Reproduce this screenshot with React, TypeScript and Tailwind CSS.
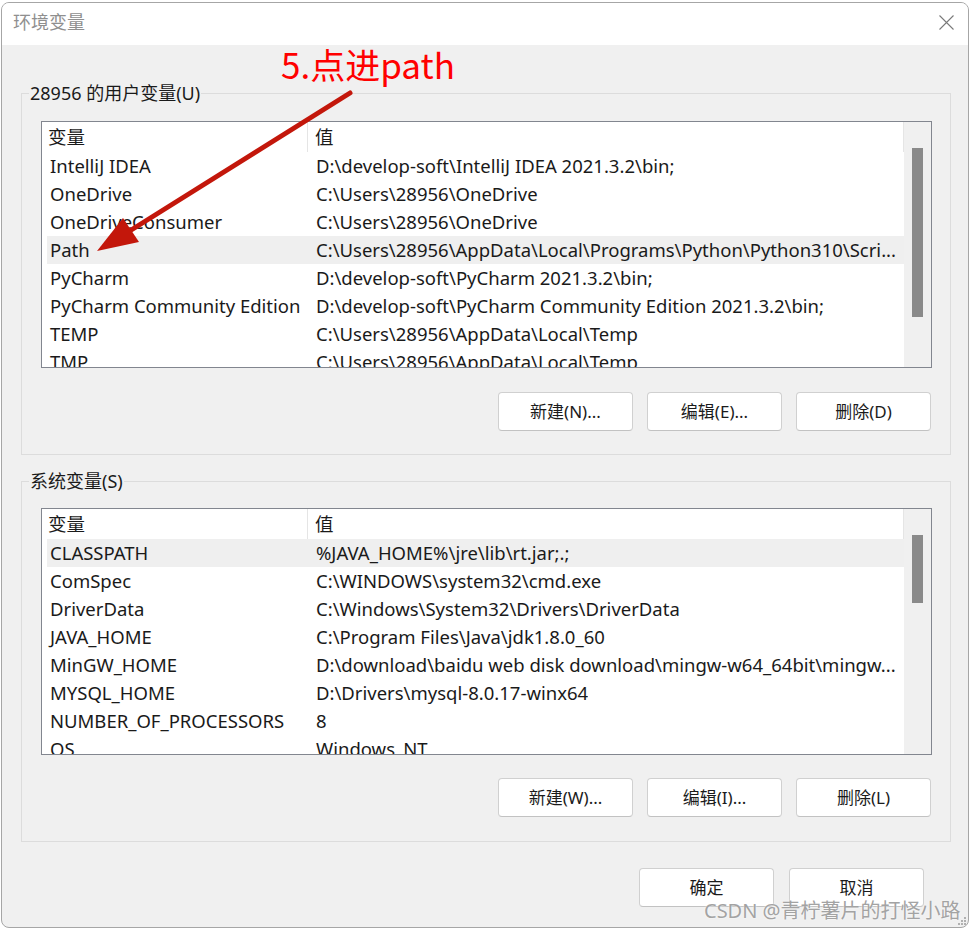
const userVars = [
  ['IntelliJ IDEA', 'D:\\develop-soft\\IntelliJ IDEA 2021.3.2\\bin;'],
  ['OneDrive', 'C:\\Users\\28956\\OneDrive'],
  ['OneDriveConsumer', 'C:\\Users\\28956\\OneDrive'],
  ['Path', 'C:\\Users\\28956\\AppData\\Local\\Programs\\Python\\Python310\\Scri...'],
  ['PyCharm', 'D:\\develop-soft\\PyCharm 2021.3.2\\bin;'],
  ['PyCharm Community Edition', 'D:\\develop-soft\\PyCharm Community Edition 2021.3.2\\bin;'],
  ['TEMP', 'C:\\Users\\28956\\AppData\\Local\\Temp'],
  ['TMP', 'C:\\Users\\28956\\AppData\\Local\\Temp'],
];

const systemVars = [
  ['CLASSPATH', '%JAVA_HOME%\\jre\\lib\\rt.jar;.;'],
  ['ComSpec', 'C:\\WINDOWS\\system32\\cmd.exe'],
  ['DriverData', 'C:\\Windows\\System32\\Drivers\\DriverData'],
  ['JAVA_HOME', 'C:\\Program Files\\Java\\jdk1.8.0_60'],
  ['MinGW_HOME', 'D:\\download\\baidu web disk download\\mingw-w64_64bit\\mingw...'],
  ['MYSQL_HOME', 'D:\\Drivers\\mysql-8.0.17-winx64'],
  ['NUMBER_OF_PROCESSORS', '8'],
  ['OS', 'Windows_NT'],
];

const Button = ({label}: {label: string}) => {
  return (
    <button className="flex h-[39px] w-[135px] items-center justify-center rounded-[4px] border border-[#d0d0d0] border-b-[#c2c2c2] bg-white text-[17px] text-[#1b1b1b]">
      {label}
    </button>
  );
};

const VarList = ({rows, selected, thumb}: {rows: string[][]; selected: number; thumb: string}) => {
  return (
    <div className="flex h-[247px] border border-[#82868f] bg-white">
      <div className="flex min-w-0 flex-1 flex-col overflow-hidden">
        <div className="flex h-[30px] shrink-0 border-r border-[#e5e5e5]">
          <div className="flex w-[266px] items-center border-r border-[#e5e5e5] pl-[6px]">变量</div>
          <div className="flex items-center pl-[7px]">值</div>
        </div>
        {rows.map(([name, value], index) => (
          <div
            key={name}
            className={`ml-[5px] flex h-[28px] shrink-0 items-center whitespace-nowrap ${index === selected ? 'bg-[#efefef]' : ''}`}
          >
            <div className="w-[261px] shrink-0 pl-[3px]">{name}</div>
            <div className="overflow-hidden pl-[8px]">{value}</div>
          </div>
        ))}
      </div>
      <div className="w-[27px] shrink-0 bg-[#f0f0f0] pl-[8px] pt-[26px]">
        <div className={`w-[11px] bg-[#8a8a8a] ${thumb}`} />
      </div>
    </div>
  );
};

const Arrow = () => {
  return (
    <svg className="pointer-events-none absolute left-0 top-0" width="972" height="931" viewBox="0 0 972 931">
      <line x1="350" y1="93" x2="128" y2="232" stroke="#c3170b" strokeWidth="5" strokeLinecap="round" />
      <polygon points="97,251 123,218 139,242" fill="#c3170b" />
    </svg>
  );
};

export default function App() {
  return (
    <div className="relative h-[931px] w-[972px] overflow-hidden bg-white font-['Noto_Sans','Noto_Sans_CJK_SC',sans-serif] text-[18.5px] text-[#1a1a1a]">
      <div className="ml-[1px] mt-[2px] flex h-[926px] w-[968px] flex-col overflow-hidden rounded-[8px] border border-[#a6a6a6] bg-[#f0f0f0]">
        <div className="flex h-[42px] shrink-0 items-center justify-between bg-white pb-[3px] pl-[11px] pr-[14px]">
          <span className="text-[18px] text-[#8f8f8f]">环境变量</span>
          <svg width="15" height="15" viewBox="0 0 15 15">
            <path d="M0.5 0.5 L14.5 14.5 M14.5 0.5 L0.5 14.5" stroke="#7a7a7a" strokeWidth="1.1" />
          </svg>
        </div>

        <fieldset className="ml-[19px] mr-[17px] mt-[36px] border border-[#dcdcdc] pb-[23px] pl-[19px] pr-[18px] pt-[16px]">
          <legend className="-ml-[12px] px-[1px] text-[18px] leading-[24px]">28956 的用户变量(U)</legend>
          <VarList rows={userVars} selected={3} thumb="h-[169px]" />
          <div className="mt-[24px] flex justify-end gap-[14px] pr-[1px]">
            <Button label="新建(N)..." />
            <Button label="编辑(E)..." />
            <Button label="删除(D)" />
          </div>
        </fieldset>

        <fieldset className="ml-[19px] mr-[17px] mt-[14px] border border-[#dcdcdc] pb-[24px] pl-[19px] pr-[18px] pt-[15px]">
          <legend className="-ml-[12px] px-[1px] text-[18px] leading-[24px]">系统变量(S)</legend>
          <VarList rows={systemVars} selected={0} thumb="h-[68px]" />
          <div className="mt-[23px] flex justify-end gap-[14px] pr-[1px]">
            <Button label="新建(W)..." />
            <Button label="编辑(I)..." />
            <Button label="删除(L)" />
          </div>
        </fieldset>

        <div className="mt-[26px] flex justify-end gap-[15px] pr-[44px]">
          <Button label="确定" />
          <Button label="取消" />
        </div>
      </div>

      <div className="absolute left-[281px] top-[46px] text-[35px] leading-none text-[#ff0000] font-['Noto_Sans_CJK_SC',sans-serif]">
        5.点进path
      </div>
      <Arrow />

      <div className="absolute left-[704px] top-[899px] text-[20px] leading-[24px] text-[#a3a3a3] [text-shadow:0_0_2px_#ffffff]">
        CSDN @青柠薯片的打怪小路
      </div>
      <svg className="absolute left-[957px] top-[916px]" width="10" height="10" viewBox="0 0 10 10">
        <rect x="7" y="1" width="2" height="2" fill="#b0b0b0" />
        <rect x="4" y="4" width="2" height="2" fill="#b0b0b0" />
        <rect x="7" y="4" width="2" height="2" fill="#b0b0b0" />
        <rect x="1" y="7" width="2" height="2" fill="#b0b0b0" />
        <rect x="4" y="7" width="2" height="2" fill="#b0b0b0" />
        <rect x="7" y="7" width="2" height="2" fill="#b0b0b0" />
      </svg>
    </div>
  );
}
